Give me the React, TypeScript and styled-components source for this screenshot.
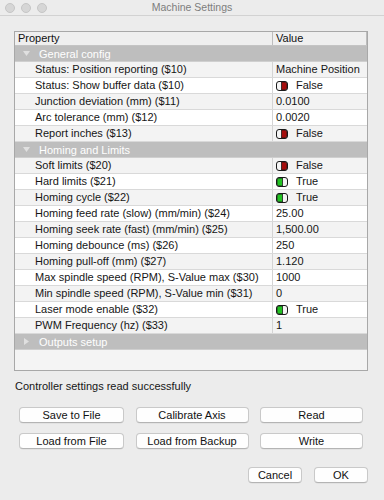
import React from "react";
import styled, { createGlobalStyle } from "styled-components";

const Global = createGlobalStyle`
  html, body { margin: 0; padding: 0; background: #ececec; }
  body {
    font-family: "Liberation Sans", Arial, Helvetica, sans-serif;
    font-size: 11px;
    color: #161616;
  }
  * { box-sizing: border-box; }
`;

const Window = styled.div`
  width: 384px;
  height: 500px;
  display: flex;
  flex-direction: column;
  background: #ececec;
  overflow: hidden;
`;

const TitleBar = styled.div`
  height: 16px;
  flex: none;
  border-bottom: 1px solid #d2d2d2;
  display: grid;
  grid-template-columns: 1fr auto 1fr;
  align-items: center;
`;

const Lights = styled.div`
  display: flex;
  gap: 6px;
  padding-left: 5px;
`;

const Light = styled.span`
  width: 10px;
  height: 10px;
  border-radius: 50%;
  background: #d6d6d6;
  border: 1px solid #c6c6c6;
`;

const Title = styled.div`
  font-size: 10.5px;
  color: #7d7d7d;
  line-height: 15px;
`;

const Table = styled.div`
  margin: 15px 16px 0 14px;
  height: 340px;
  border: 1px solid #a8a8a8;
  background: #f4f4f4;
  display: flex;
  flex-direction: column;
`;

const HeaderRow = styled.div`
  height: 14px;
  display: grid;
  grid-template-columns: 257px 1fr;
  background: #efefef;
  border-bottom: 1px solid #c4c4c4;
  line-height: 13px;
`;

const HeaderCell = styled.div<{ $divider?: boolean }>`
  padding-left: 3px;
  border-left: ${(p) => (p.$divider ? "1px solid #bdbdbd" : "none")};
  border-right: ${(p) => (p.$divider ? "1px solid #bdbdbd" : "none")};
  color: #111;
`;

const GroupRow = styled.div`
  height: 16px;
  display: flex;
  align-items: center;
  background: #bebebe;
  color: #fff;
  border-bottom: 1px solid #cfcfcf;
`;

const Arrow = styled.span`
  width: 24px;
  padding-left: 8px;
  display: flex;
  align-items: center;
`;

const Row = styled.div<{ $alt: boolean }>`
  height: 16px;
  display: grid;
  grid-template-columns: 257px 1fr;
  background: ${(p) => (p.$alt ? "#f3f3f3" : "#ffffff")};
  border-bottom: 1px solid #d9d9d9;
  line-height: 15px;
`;

const Label = styled.div`
  padding-left: 20px;
  white-space: nowrap;
`;

const Value = styled.div`
  border-left: 1px solid #d4d4d4;
  padding-left: 3px;
  display: flex;
  align-items: center;
  gap: 8px;
  white-space: nowrap;
`;

const Filler = styled.div`
  flex: 1;
  background: #f4f4f4;
`;

const Status = styled.div`
  margin: 9px 0 0 15px;
  line-height: 13px;
`;

const ButtonGrid = styled.div`
  margin: 14px 0 0 19px;
  display: grid;
  grid-template-columns: 105px 113px 103px;
  column-gap: 11.5px;
  row-gap: 10px;
`;

const Button = styled.button<{ $w?: number }>`
  height: 16px;
  width: ${(p) => (p.$w ? `${p.$w}px` : "auto")};
  padding: 0;
  font-family: inherit;
  font-size: 11px;
  color: #111;
  background: #fefefe;
  border: 1px solid #c9c9c9;
  border-bottom-color: #b4b4b4;
  border-radius: 4px;
  box-shadow: 0 0.5px 0.5px rgba(0, 0, 0, 0.08);
  line-height: 14px;
`;

const Footer = styled.div`
  margin: 18px 16px 0 0;
  display: flex;
  justify-content: flex-end;
  gap: 12px;
`;

const Toggle = ({ on }: { on: boolean }) => (
  <svg width="12" height="10" viewBox="0 0 12 10">
    <rect x="0.5" y="0.5" width="11" height="9" rx="2.5" fill="#f4f4f4" stroke="#1a1a1a" />
    {on ? (
      <path d="M3 1 H6.5 V9 H3 A2 2 0 0 1 1 7 V3 A2 2 0 0 1 3 1 Z" fill="#22c322" stroke="#1a1a1a" strokeWidth="0.8" />
    ) : (
      <path d="M5.5 1 H9 A2 2 0 0 1 11 3 V7 A2 2 0 0 1 9 9 H5.5 Z" fill="#a50d0d" stroke="#1a1a1a" strokeWidth="0.8" />
    )}
  </svg>
);

const Triangle = ({ open }: { open: boolean }) => (
  <svg width="7" height="7" viewBox="0 0 7 7">
    {open ? <path d="M0 1 H7 L3.5 6 Z" fill="#e0e0e0" /> : <path d="M1 0 V7 L6 3.5 Z" fill="#e0e0e0" />}
  </svg>
);

type Item = { label: string; value?: string; bool?: boolean };

const general: Item[] = [
  { label: "Status: Position reporting ($10)", value: "Machine Position" },
  { label: "Status: Show buffer data ($10)", bool: false },
  { label: "Junction deviation (mm) ($11)", value: "0.0100" },
  { label: "Arc tolerance (mm) ($12)", value: "0.0020" },
  { label: "Report inches ($13)", bool: false },
];

const homing: Item[] = [
  { label: "Soft limits ($20)", bool: false },
  { label: "Hard limits ($21)", bool: true },
  { label: "Homing cycle ($22)", bool: true },
  { label: "Homing feed rate (slow) (mm/min) ($24)", value: "25.00" },
  { label: "Homing seek rate (fast) (mm/min) ($25)", value: "1,500.00" },
  { label: "Homing debounce (ms) ($26)", value: "250" },
  { label: "Homing pull-off (mm) ($27)", value: "1.120" },
  { label: "Max spindle speed (RPM), S-Value max ($30)", value: "1000" },
  { label: "Min spindle speed (RPM), S-Value min ($31)", value: "0" },
  { label: "Laser mode enable ($32)", bool: true },
  { label: "PWM Frequency (hz) ($33)", value: "1" },
];

const Rows = ({ items }: { items: Item[] }) => (
  <>
    {items.map((it, i) => (
      <Row key={it.label} $alt={i % 2 === 0}>
        <Label>{it.label}</Label>
        <Value>
          {it.bool !== undefined ? (
            <>
              <Toggle on={it.bool} />
              <span>{it.bool ? "True" : "False"}</span>
            </>
          ) : (
            it.value
          )}
        </Value>
      </Row>
    ))}
  </>
);

const Group = ({ title, open }: { title: string; open: boolean }) => (
  <GroupRow>
    <Arrow>
      <Triangle open={open} />
    </Arrow>
    {title}
  </GroupRow>
);

export default function App() {
  return (
    <Window>
      <Global />
      <TitleBar>
        <Lights>
          <Light />
          <Light />
          <Light />
        </Lights>
        <Title>Machine Settings</Title>
        <div />
      </TitleBar>
      <Table>
        <HeaderRow>
          <HeaderCell>Property</HeaderCell>
          <HeaderCell $divider>Value</HeaderCell>
        </HeaderRow>
        <Group title="General config" open />
        <Rows items={general} />
        <Group title="Homing and Limits" open />
        <Rows items={homing} />
        <Group title="Outputs setup" open={false} />
        <Filler />
      </Table>
      <Status>Controller settings read successfully</Status>
      <ButtonGrid>
        <Button>Save to File</Button>
        <Button>Calibrate Axis</Button>
        <Button>Read</Button>
        <Button>Load from File</Button>
        <Button>Load from Backup</Button>
        <Button>Write</Button>
      </ButtonGrid>
      <Footer>
        <Button $w={54}>Cancel</Button>
        <Button $w={54}>OK</Button>
      </Footer>
    </Window>
  );
}
